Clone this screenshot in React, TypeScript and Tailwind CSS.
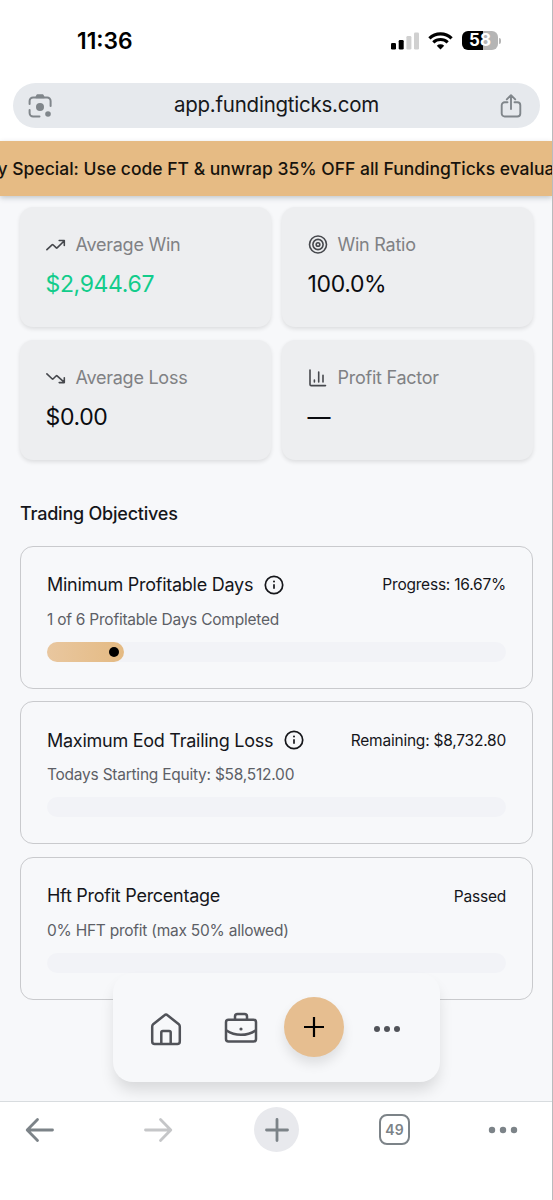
import type { ReactNode } from 'react';

type Stat = {
    label: string;
    value: string;
    icon: ReactNode;
    valueClass: string;
};

type Objective = {
    title: string;
    status: string;
    detail: string;
    progress: number;
    hasInfo: boolean;
};

const iconProps = {
    fill: 'none',
    stroke: 'currentColor',
    strokeLinecap: 'round' as const,
    strokeLinejoin: 'round' as const,
};

const TrendUp = () => (
    <svg width="20" height="20" viewBox="0 0 20 20" strokeWidth="1.6" {...iconProps}>
        <path d="M.9 14.700 6.300 9.700a.5.5 0 0 1 .7 0l3.300 3.200a.6.6 0 0 0 .8 0L18.100 6M13.200 5.500H18.300V10.400" />
    </svg>
);

const TrendDown = () => (
    <svg width="20" height="20" viewBox="0 0 20 20" strokeWidth="1.6" {...iconProps}>
        <path d="M.9 5.900 6.300 11a.5.5 0 0 0 .7 0l3.300-3.200a.6.6 0 0 1 .8 0L18.100 14.100M13.200 14.600H18.300V9.700" />
    </svg>
);

const Target = () => (
    <svg width="20" height="20" viewBox="0 0 20 20" strokeWidth="1.6" {...iconProps}>
        <circle cx="10" cy="9.5" r="8.5" />
        <circle cx="10" cy="9.5" r="5.1" />
        <circle cx="10" cy="9.5" r="1.8" />
    </svg>
);

const BarChart = () => (
    <svg width="20" height="20" viewBox="0 0 20 20" strokeWidth="1.6" {...iconProps}>
        <path d="M2 2v14.400a1.200 1.200 0 0 0 1.200 1.200H17.500M6.400 12v2M10.700 4v10M15 7.200v6.800" />
    </svg>
);

const InfoIcon = () => (
    <svg width="20" height="20" viewBox="0 0 20 20" strokeWidth="1.7" {...iconProps}>
        <circle cx="10" cy="10" r="8.7" />
        <path d="M10 9.200v4.600" strokeLinecap="butt" />
        <circle cx="10" cy="6.600" r="1" fill="currentColor" stroke="none" />
    </svg>
);

const stats: Stat[] = [
    { label: 'Average Win', value: '$2,944.67', icon: <TrendUp />, valueClass: 'text-[#12cc8b]' },
    { label: 'Win Ratio', value: '100.0%', icon: <Target />, valueClass: 'text-[#0b0c10]' },
    { label: 'Average Loss', value: '$0.00', icon: <TrendDown />, valueClass: 'text-[#0b0c10]' },
    { label: 'Profit Factor', value: '—', icon: <BarChart />, valueClass: 'text-[#0b0c10]' },
];

const objectives: Objective[] = [
    {
        title: 'Minimum Profitable Days',
        status: 'Progress: 16.67%',
        detail: '1 of 6 Profitable Days Completed',
        progress: 16.67,
        hasInfo: true,
    },
    {
        title: 'Maximum Eod Trailing Loss',
        status: 'Remaining: $8,732.80',
        detail: 'Todays Starting Equity: $58,512.00',
        progress: 0,
        hasInfo: true,
    },
    {
        title: 'Hft Profit Percentage',
        status: 'Passed',
        detail: '0% HFT profit (max 50% allowed)',
        progress: 0,
        hasInfo: false,
    },
];

const StatusBar = () => (
    <div className="flex h-[83px] shrink-0 items-center justify-between pr-[51px] pl-[77px]">
        <span className="text-[22.8px] leading-none font-semibold text-black">11:36</span>
        <div className="flex items-center pb-[2px]">
            <svg width="28" height="18" viewBox="0 0 28 18">
                <rect x="0" y="11" width="5" height="6.5" rx="1.3" fill="#000" />
                <rect x="7.7" y="8" width="5" height="9.5" rx="1.3" fill="#000" />
                <rect x="15.4" y="4" width="5" height="13.5" rx="1.3" fill="#d0d0d0" />
                <rect x="23" y="0.5" width="5" height="17" rx="1.3" fill="#d0d0d0" />
            </svg>
            <svg className="ml-[9px]" width="25" height="18" viewBox="0 0 25 18" fill="none" stroke="#000">
                <path d="M1.4 6.4a16 16 0 0 1 22.2 0" strokeWidth="3.2" />
                <path d="M5.3 10.4a10.4 10.4 0 0 1 14.4 0" strokeWidth="3.1" />
                <path d="M8.8 13.8a5.4 5.4 0 0 1 7.4 0L12.5 17.4Z" fill="#000" stroke="none" />
            </svg>
            <div className="ml-[9px] flex h-[19px] w-[36px] items-center justify-center rounded-[6px] bg-[linear-gradient(90deg,#000_58%,#b5b5b5_58%)]">
                <span className="text-[17px] leading-none font-bold text-white">58</span>
            </div>
            <div className="ml-px h-[6px] w-[2px] rounded-r-full bg-[#b5b5b5]" />
        </div>
    </div>
);

const AddressBar = () => (
    <div className="mr-[12px] ml-[13px] flex h-[45px] shrink-0 items-center justify-between rounded-full bg-[#e6e9ed] pr-[18px] pl-[15px] text-[#80868b]">
        <svg width="24" height="24" viewBox="0 0 24 24" strokeWidth="2" {...iconProps}>
            <path d="M1.600 10V7a3.500 3.500 0 0 1 3.500-3.500h14A3.500 3.500 0 0 1 22.600 7V12M1.600 16v3a3.500 3.500 0 0 0 3.500 3.500H11.500" />
            <path d="M8 3.500 9.200 1h5.600L16 3.500Z" fill="currentColor" strokeWidth="1.500" />
            <circle cx="12" cy="13" r="4" fill="currentColor" stroke="none" />
            <circle cx="20" cy="20" r="2.8" fill="currentColor" stroke="none" />
        </svg>
        <span className="pl-px text-[20.5px] tracking-[-0.24px] text-[#16181b]">app.fundingticks.com</span>
        <svg width="22" height="24" viewBox="0 0 22 24" strokeWidth="1.900" {...iconProps}>
            <path d="M7.500 8.200H4.700A3 3 0 0 0 1.700 11.200V19.500a3 3 0 0 0 3 3h12.600a3 3 0 0 0 3-3V11.200a3 3 0 0 0-3-3H14.500M11 15V1.700M6.800 5.400 11 1.200l4.200 4.200" />
        </svg>
    </div>
);

const PromoBanner = () => (
    <div className="relative z-10 mt-[13px] flex h-[55px] shrink-0 items-center bg-[#e6bb84] pt-px shadow-[0_2px_5px_rgba(60,80,90,0.28)]">
        <div className="flex w-full justify-center overflow-hidden">
            <span className="text-[17.5px] font-medium whitespace-nowrap text-[#17130d]">
                y Special: Use code FT &amp; unwrap 35% OFF all FundingTicks evalua
            </span>
        </div>
    </div>
);

const StatCard = ({ stat }: { stat: Stat }) => (
    <div className="h-[120px] rounded-[13px] bg-[#edeef0] px-[25.5px] pt-[24px] shadow-[0_2px_4px_rgba(0,0,0,0.11)]">
        <div className="flex h-[27px] items-center gap-[10px] text-[#46484d]">
            {stat.icon}
            <span className="text-[18px] tracking-[-0.25px] text-[#808184]">{stat.label}</span>
        </div>
        <div className={`mt-[8px] text-[23px] leading-[36px] tracking-[-0.35px] ${stat.valueClass}`}>{stat.value}</div>
    </div>
);

const ObjectiveCard = ({ objective }: { objective: Objective }) => (
    <div className="h-[143px] rounded-[13px] border border-[#c9cacd] px-[26px] pt-[24px]">
        <div className="flex h-[28px] items-center justify-between">
            <div className="flex items-center gap-[11px] text-[#15161a]">
                <h3 className="text-[18px] tracking-[-0.26px]">{objective.title}</h3>
                {objective.hasInfo && <InfoIcon />}
            </div>
            <span className="pt-px text-[15.5px] tracking-[-0.22px] text-[#15161a]">{objective.status}</span>
        </div>
        <p className="mt-[9px] text-[15.5px] leading-[24px] tracking-[-0.24px] text-[#5d5f66]">{objective.detail}</p>
        <div className="mt-[10px] h-[20px] rounded-full bg-[#f2f3f7]">
            {objective.progress > 0 && (
                <div
                    className="flex h-full items-center justify-end rounded-full bg-linear-to-r from-[#e9c79f] to-[#e4ba83] pr-[5px]"
                    style={{ width: `${objective.progress}%` }}
                >
                    <span className="size-[10px] rounded-full bg-black" />
                </div>
            )}
        </div>
    </div>
);

const BottomNav = () => (
    <nav className="absolute bottom-[19px] left-[113px] flex h-[109px] w-[327px] items-center rounded-[20px] bg-[#f7f8fa] text-[#515359] shadow-[0_10px_15px_-2px_rgba(0,0,0,0.13)]">
        <svg className="mt-[2px] ml-[37px]" width="32" height="34" viewBox="0 0 32 34" strokeWidth="2.500" {...iconProps}>
            <path d="M2.200 14.500a3 3 0 0 1 1-2.200L14.500 3.200a2.300 2.300 0 0 1 3 0L28.800 12.300a3 3 0 0 1 1 2.200V29.500a2.500 2.500 0 0 1-2.500 2.500H4.700a2.500 2.500 0 0 1-2.500-2.500Z" />
            <path d="M11.300 31.500V20.500a1.600 1.600 0 0 1 1.600-1.600h6.200a1.600 1.600 0 0 1 1.600 1.600V31.500" />
        </svg>
        <svg className="ml-[42px]" width="34" height="32" viewBox="0 0 34 32" strokeWidth="2.500" {...iconProps}>
            <rect x="2" y="7.800" width="30" height="21.700" rx="2.500" />
            <path d="M11 7.500V4.500a2.500 2.500 0 0 1 2.500-2.500h7a2.500 2.500 0 0 1 2.500 2.500V7.500M2.500 18.500c8.500 5.800 20.500 5.800 29 0" />
            <circle cx="17" cy="17" r="1.600" fill="currentColor" stroke="none" />
        </svg>
        <div className="mb-[2px] ml-[26px] flex size-[60px] items-center justify-center rounded-full bg-[#e6be90] text-black shadow-[0_7px_12px_rgba(0,0,0,0.1)]">
            <svg width="22" height="22" viewBox="0 0 22 22" fill="none" stroke="currentColor" strokeWidth="2.200">
                <path d="M11 1v20M1 11h20" />
            </svg>
        </div>
        <svg className="mt-[3px] ml-[29px]" width="28" height="8" viewBox="0 0 28 8" fill="currentColor">
            <circle cx="4" cy="4" r="3" />
            <circle cx="14" cy="4" r="3" />
            <circle cx="24" cy="4" r="3" />
        </svg>
    </nav>
);

const BrowserToolbar = () => (
    <div className="h-[99px] shrink-0 border-t border-[#d8dcdf] bg-white pl-[25px] text-[#7c8388]">
        <div className="flex h-[55px] items-center">
            <svg width="30" height="26" viewBox="0 0 30 26" strokeWidth="2.800" {...iconProps}>
                <path d="M27.500 13H2.500M12.500 2.500 2.200 13l10.300 10.500" />
            </svg>
            <svg className="ml-[88px] text-[#c5c6c8]" width="30" height="26" viewBox="0 0 30 26" strokeWidth="2.800" {...iconProps}>
                <path d="M2.500 13h25M17.500 2.500 27.800 13 17.500 23.500" />
            </svg>
            <div className="ml-[81px] flex size-[45px] items-center justify-center rounded-full bg-[#e8e9ed]">
                <svg width="26" height="26" viewBox="0 0 26 26" strokeWidth="2.800" {...iconProps}>
                    <path d="M13 2.500v21M2.500 13h21" />
                </svg>
            </div>
            <div className="ml-[80px] flex size-[31px] items-center justify-center rounded-[8px] border-2 border-[#7c8388]">
                <span className="text-[14px] leading-none font-semibold">49</span>
            </div>
            <svg className="ml-[78px]" width="30" height="8" viewBox="0 0 30 8" fill="currentColor">
                <circle cx="4" cy="4" r="3.200" />
                <circle cx="15" cy="4" r="3.200" />
                <circle cx="26" cy="4" r="3.200" />
            </svg>
        </div>
    </div>
);

const App = () => {
    return (
        <div className="flex h-[1200px] w-[553px] flex-col overflow-hidden border-r border-[#b9bbbd] bg-white font-[Inter,sans-serif]">
            <StatusBar />
            <AddressBar />
            <PromoBanner />

            <main className="relative min-h-0 flex-1 overflow-hidden bg-[#f7f8fa] pt-[11px] pr-[19px] pl-[20px]">
                <div className="grid grid-cols-2 gap-x-[11px] gap-y-[13px]">
                    {stats.map((stat) => (
                        <StatCard key={stat.label} stat={stat} />
                    ))}
                </div>

                <h2 className="mt-[40px] text-[18px] leading-[28px] font-medium tracking-[-0.22px] text-[#15161a]">
                    Trading Objectives
                </h2>

                <div className="mt-[17.5px] flex flex-col gap-[12.6px]">
                    {objectives.map((objective) => (
                        <ObjectiveCard key={objective.title} objective={objective} />
                    ))}
                </div>

                <BottomNav />
            </main>

            <BrowserToolbar />
        </div>
    );
};

export default App;
